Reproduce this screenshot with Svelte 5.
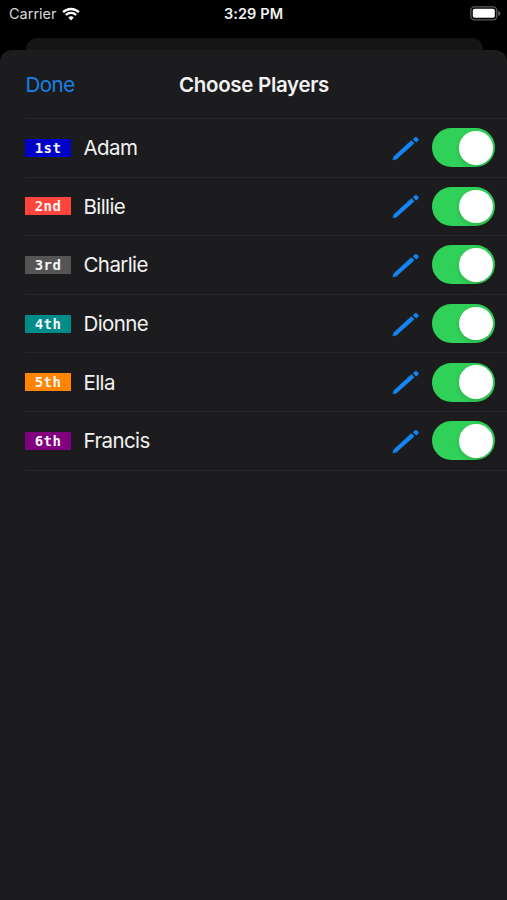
<script lang="ts">
type Player = {
	place: string;
	name: string;
	color: string;
	active: boolean;
};

let players = $state<Player[]>([
	{ place: '1st', name: 'Adam', color: '#0000c8', active: true },
	{ place: '2nd', name: 'Billie', color: '#ff453c', active: true },
	{ place: '3rd', name: 'Charlie', color: '#555555', active: true },
	{ place: '4th', name: 'Dionne', color: '#008c8a', active: true },
	{ place: '5th', name: 'Ella', color: '#ff8400', active: true },
	{ place: '6th', name: 'Francis', color: '#800080', active: true }
]);
</script>

<div class="screen">
	<header class="status">
		<div class="carrier">
			<span>Carrier</span>
			<svg class="wifi" viewBox="0 0 18 14" aria-hidden="true">
				<path d="M1.1 5.2a11.4 11.4 0 0 1 15.8 0" />
				<path d="M3.8 8a7.6 7.6 0 0 1 10.4 0" />
				<path class="dot" d="M6.3 10.6a4 4 0 0 1 5.4 0L9 13.4z" />
			</svg>
		</div>
		<span class="time">3:29 PM</span>
		<svg class="battery" viewBox="0 0 31 15" aria-hidden="true">
			<rect class="shell" x="0.8" y="0.8" width="26" height="13" rx="3.8" />
			<rect x="2.8" y="2.8" width="22" height="9" rx="1.8" fill="#fff" />
			<path d="M28.3 5v4.8c1.2-.4 2-1.3 2-2.4s-.8-2-2-2.4z" fill="#6b6b6b" />
		</svg>
	</header>

	<!-- edge of the view the sheet was presented from -->
	<div class="behind"></div>

	<main class="sheet">
		<nav class="bar">
			<button type="button" class="done">Done</button>
			<h1>Choose Players</h1>
		</nav>

		<ul class="players">
			{#each players as player (player.place)}
				<li>
					<span class="place" style:background={player.color}>{player.place}</span>
					<span class="name">{player.name}</span>
					<button type="button" class="edit" aria-label="Edit {player.name}">
						<svg viewBox="0 0 28 26" aria-hidden="true">
							<path d="M.8 24.9 1.9 21.4 19.3 5.4 22.3 8.2 4.4 24.2Z" />
							<path d="m21 4.2 2-1.7q.9-.8 1.8 0l1.4 1.4q.8.9 0 1.7l-2 1.6z" />
						</svg>
					</button>
					<button
						type="button"
						class="toggle"
						class:on={player.active}
						role="switch"
						aria-checked={player.active}
						aria-label={player.name}
						onclick={() => (player.active = !player.active)}
					>
						<span class="knob"></span>
					</button>
				</li>
			{/each}
		</ul>
	</main>
</div>

<style>
	:global(body) {
		background: #000;
	}
	.screen {
		display: flex;
		flex-direction: column;
		height: 900px;
		overflow: hidden;
		background: #000;
		color: #f2f2f2;
		font-family: Inter, 'Liberation Sans', sans-serif;
	}
	button {
		border: 0;
		padding: 0;
		background: none;
		font-family: inherit;
		cursor: pointer;
	}
	.status {
		display: grid;
		grid-template-columns: 1fr auto 1fr;
		align-items: center;
		box-sizing: border-box;
		height: 38px;
		padding: 0 6px 11px 9px;
		font-size: 14.5px;
	}
	.carrier {
		display: flex;
		align-items: center;
		gap: 5px;
		color: #d8d8d8;
	}
	.wifi {
		width: 18px;
		height: 14px;
		fill: none;
		stroke: #fff;
		stroke-width: 2.3;
	}
	.wifi .dot {
		fill: #fff;
		stroke: none;
	}
	.time {
		margin-right: 3px;
		font-weight: 600;
		font-size: 14.5px;
		letter-spacing: 0.1px;
	}
	.battery {
		justify-self: end;
		width: 31px;
		height: 15px;
	}
	.shell {
		fill: none;
		stroke: #5c5c5c;
		stroke-width: 1.3;
	}
	.behind {
		flex: none;
		height: 12px;
		margin: 0 24px 0 26px;
		border-radius: 11px 11px 0 0;
		background: #151515;
	}
	.sheet {
		flex: 1;
		border-radius: 12px 12px 0 0;
		background: #1c1c1e;
	}
	.bar {
		display: grid;
		grid-template-columns: 1fr auto 1fr;
		align-items: center;
		height: 68px;
		padding: 0 25px 0 26px;
	}
	.done {
		justify-self: start;
		margin-left: -0.5px;
		color: #1780e8;
		font-size: 20.5px;
		letter-spacing: -0.5px;
	}
	h1 {
		margin: 0;
		font-size: 20.5px;
		font-weight: 600;
		letter-spacing: -0.3px;
	}
	.players {
		margin: 0 0 0 25px;
		padding: 0;
		list-style: none;
		border-top: 1px solid #272729;
	}
	li {
		display: flex;
		align-items: center;
		box-sizing: border-box;
		height: 58.6px;
		padding-right: 12px;
		border-bottom: 1px solid #272729;
	}
	.place {
		width: 46px;
		height: 18px;
		color: #f4f4f4;
		font: bold 14px/18px 'DejaVu Sans Mono', monospace;
		letter-spacing: 0.4px;
		text-align: center;
	}
	.name {
		flex: 1;
		margin: 0 0 0 12.5px;
		font-size: 20.5px;
		letter-spacing: -0.6px;
	}
	.edit {
		width: 28px;
		height: 26px;
		margin-right: 12px;
	}
	.edit svg {
		display: block;
		width: 28px;
		height: 26px;
		fill: #1485f5;
		stroke: #1485f5;
		stroke-width: 0.4;
		stroke-linejoin: round;
	}
	.toggle {
		display: flex;
		align-items: center;
		box-sizing: border-box;
		width: 63px;
		height: 39px;
		padding: 0 2.5px;
		border-radius: 20px;
		background: #39393d;
	}
	.toggle.on {
		justify-content: flex-end;
		background: #30d158;
	}
	.knob {
		width: 33.5px;
		height: 33.5px;
		border-radius: 50%;
		background: #fff;
		box-shadow: 0 2px 5px rgba(0, 0, 0, 0.15);
	}
</style>
